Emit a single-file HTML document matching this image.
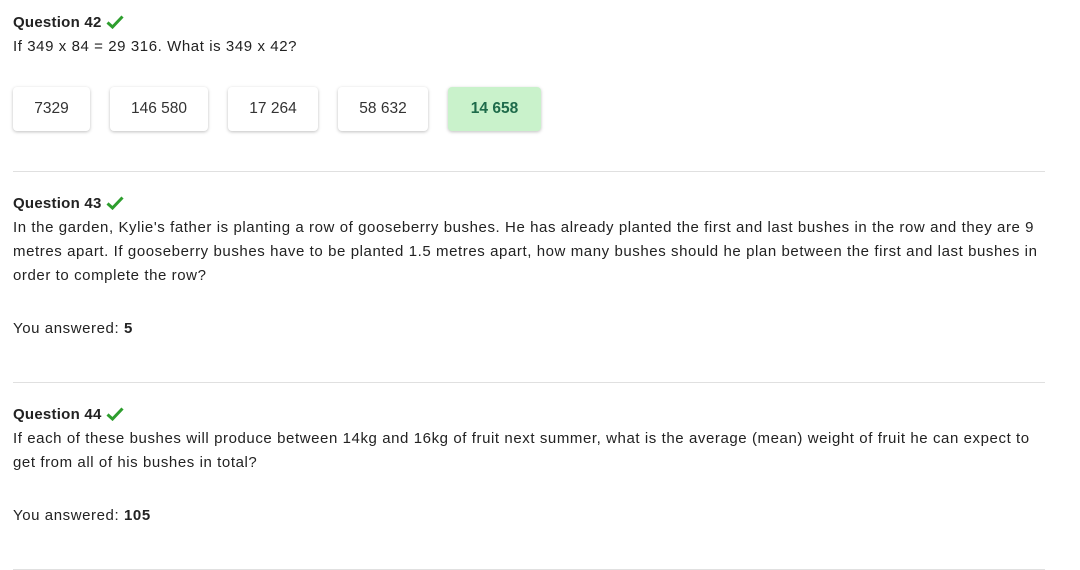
<!DOCTYPE html>
<html><head><style>
body{margin:0;background:#fff;font-family:"Liberation Sans",sans-serif;color:#222;font-size:15px;}
.q{position:absolute;left:13px;width:1060px;white-space:nowrap}
.t{font-weight:bold;font-size:15px;letter-spacing:0.25px}
.ck{display:inline-block;vertical-align:-2px;margin-left:4px}
p{margin:0;line-height:24px;letter-spacing:0.58px}
.b{position:absolute;top:87px;height:44px;background:#fff;border-radius:4px;box-shadow:0 1px 3px rgba(0,0,0,.25);text-align:center;line-height:44px;font-size:15.5px;color:#333}
.hr{position:absolute;left:13px;width:1032px;height:1px;background:#e0e0e0}
</style></head><body>
<div class="q" style="top:11px"><p class="t">Question 42<svg class="ck" width="18" height="14" viewBox="0 0 18 14"><path d="M1.5 7.5 L6.5 12 L16.5 1.5" stroke="#2e9e2e" stroke-width="3" fill="none"/></svg></p>
<p>If 349 x 84 = 29 316. What is 349 x 42?</p></div>
<div class="b" style="left:13px;width:77px">7329</div>
<div class="b" style="left:110px;width:98px">146 580</div>
<div class="b" style="left:228px;width:90px">17 264</div>
<div class="b" style="left:338px;width:90px">58 632</div>
<div class="b" style="left:448px;width:93px;background:#c9f2cb;color:#1e6b4a;font-weight:bold">14 658</div>
<div class="hr" style="top:171px"></div>
<div class="q" style="top:192px"><p class="t">Question 43<svg class="ck" width="18" height="14" viewBox="0 0 18 14"><path d="M1.5 7.5 L6.5 12 L16.5 1.5" stroke="#2e9e2e" stroke-width="3" fill="none"/></svg></p>
<p>In the garden, Kylie's father is planting a row of gooseberry bushes. He has already planted the first and last bushes in the row and they are 9<br>metres apart. If gooseberry bushes have to be planted 1.5 metres apart, how many bushes should he plan between the first and last bushes in<br>order to complete the row?</p>
<p style="margin-top:29px">You answered: <b>5</b></p></div>
<div class="hr" style="top:382px"></div>
<div class="q" style="top:403px"><p class="t">Question 44<svg class="ck" width="18" height="14" viewBox="0 0 18 14"><path d="M1.5 7.5 L6.5 12 L16.5 1.5" stroke="#2e9e2e" stroke-width="3" fill="none"/></svg></p>
<p>If each of these bushes will produce between 14kg and 16kg of fruit next summer, what is the average (mean) weight of fruit he can expect to<br>get from all of his bushes in total?</p>
<p style="margin-top:29px">You answered: <b>105</b></p></div>
<div class="hr" style="top:569px"></div>
</body></html>
